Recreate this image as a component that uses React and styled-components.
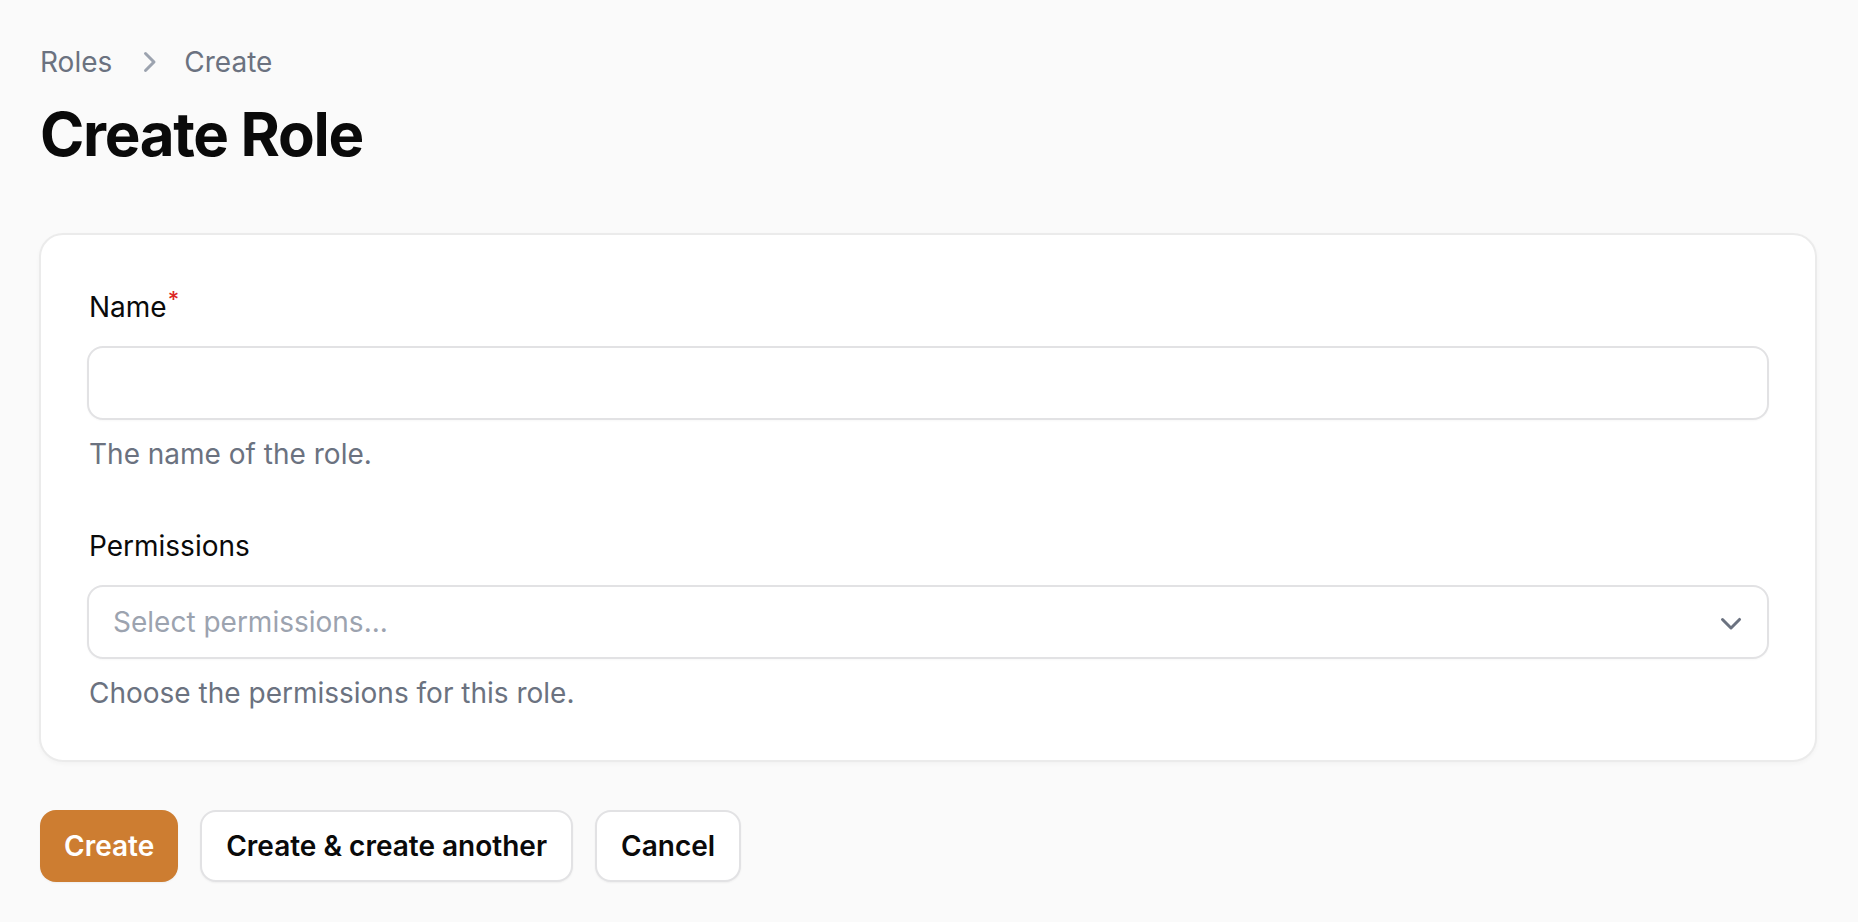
import React from "react";
import styled, { createGlobalStyle } from "styled-components";

const GlobalStyle = createGlobalStyle`
  html, body {
    margin: 0;
    padding: 0;
    background: #fafafa;
  }
  body {
    font-family: Inter, "Noto Sans", "Liberation Sans", sans-serif;
    color: #0a0a0a;
    -webkit-font-smoothing: antialiased;
  }
  * {
    box-sizing: border-box;
  }
`;

const Page = styled.main`
  min-height: 922px;
  padding: 42px 41px 40px 39px;
  display: flex;
  flex-direction: column;
`;

const Header = styled.header`
  display: flex;
  flex-direction: column;
  gap: 16px;
  padding-left: 1px;
`;

const Breadcrumbs = styled.nav`
  display: flex;
  align-items: center;
  gap: 16px;
  font-size: 28px;
  line-height: 40px;
  font-weight: 400;
  color: #6b7280;
`;

const Crumb = styled.a`
  color: inherit;
  text-decoration: none;
`;

const Separator = styled.svg`
  width: 40px;
  height: 40px;
  color: #9ca3af;
  flex-shrink: 0;
`;

const Heading = styled.h1`
  margin: 0;
  font-size: 60px;
  line-height: 72px;
  font-weight: 700;
  letter-spacing: -0.022em;
  color: #0a0a0a;
`;

const Card = styled.section`
  margin-top: 63px;
  background: #fff;
  border: 2px solid #ebebeb;
  border-radius: 24px;
  box-shadow: 0 2px 4px rgba(0, 0, 0, 0.03);
  padding: 44px 46px 47px 46px;
  display: flex;
  flex-direction: column;
  gap: 52px;
`;

const Field = styled.div`
  display: flex;
  flex-direction: column;
`;

const Label = styled.label`
  font-size: 28px;
  line-height: 40px;
  font-weight: 400;
  color: #0a0a0a;
  margin-bottom: 19px;
  padding-left: 2px;

  sup {
    color: #dc2626;
    font-weight: 500;
    font-size: 22px;
    margin-left: 1px;
  }
`;

const Control = styled.div`
  height: 74px;
  background: #fff;
  border: 2px solid #e2e2e4;
  border-radius: 16px;
  box-shadow: 0 1px 2px rgba(0, 0, 0, 0.03);
  display: flex;
  align-items: center;
  padding: 0 16px 0 24px;
`;

const TextInput = styled.input`
  flex: 1;
  border: none;
  outline: none;
  background: transparent;
  font: inherit;
  font-size: 28px;
  color: #0a0a0a;
`;

const Placeholder = styled.span`
  flex: 1;
  font-size: 28px;
  line-height: 40px;
  color: #9ca3af;
`;

const Caret = styled.svg`
  width: 40px;
  height: 40px;
  color: #6b7280;
`;

const Hint = styled.p`
  margin: 14px 0 0;
  padding-left: 2px;
  font-size: 28px;
  line-height: 40px;
  color: #6b7280;
`;

const Actions = styled.div`
  margin-top: 48px;
  display: flex;
  gap: 22px;
  padding-left: 1px;
`;

const Button = styled.button`
  height: 72px;
  padding: 0 24px;
  border-radius: 16px;
  border: ${(p) => (p.$primary ? "none" : "2px solid #e2e2e4")};
  background: ${(p) => (p.$primary ? "#cd7d31" : "#fff")};
  color: ${(p) => (p.$primary ? "#fff" : "#0a0a0a")};
  font-family: inherit;
  font-size: 28px;
  line-height: 40px;
  font-weight: 600;
  box-shadow: 0 1px 2px rgba(0, 0, 0, 0.05);
  cursor: pointer;
`;

export default function App() {
  return (
    <>
      <GlobalStyle />
      <Page>
        <Header>
          <Breadcrumbs>
            <Crumb href="#">Roles</Crumb>
            <Separator viewBox="0 0 20 20" fill="currentColor">
              <path
                fillRule="evenodd"
                d="M8.22 5.22a.75.75 0 0 1 1.06 0l4.25 4.25a.75.75 0 0 1 0 1.06l-4.25 4.25a.75.75 0 0 1-1.06-1.06L11.94 10 8.22 6.28a.75.75 0 0 1 0-1.06Z"
                clipRule="evenodd"
              />
            </Separator>
            <Crumb href="#">Create</Crumb>
          </Breadcrumbs>
          <Heading>Create Role</Heading>
        </Header>

        <Card>
          <Field>
            <Label>
              Name<sup>*</sup>
            </Label>
            <Control>
              <TextInput type="text" />
            </Control>
            <Hint>The name of the role.</Hint>
          </Field>

          <Field>
            <Label>Permissions</Label>
            <Control>
              <Placeholder>Select permissions...</Placeholder>
              <Caret viewBox="0 0 20 20" fill="currentColor">
                <path
                  fillRule="evenodd"
                  d="M5.22 8.22a.75.75 0 0 1 1.06 0L10 11.94l3.72-3.72a.75.75 0 1 1 1.06 1.06l-4.25 4.25a.75.75 0 0 1-1.06 0L5.22 9.28a.75.75 0 0 1 0-1.06Z"
                  clipRule="evenodd"
                />
              </Caret>
            </Control>
            <Hint>Choose the permissions for this role.</Hint>
          </Field>
        </Card>

        <Actions>
          <Button $primary>Create</Button>
          <Button>Create &amp; create another</Button>
          <Button>Cancel</Button>
        </Actions>
      </Page>
    </>
  );
}
